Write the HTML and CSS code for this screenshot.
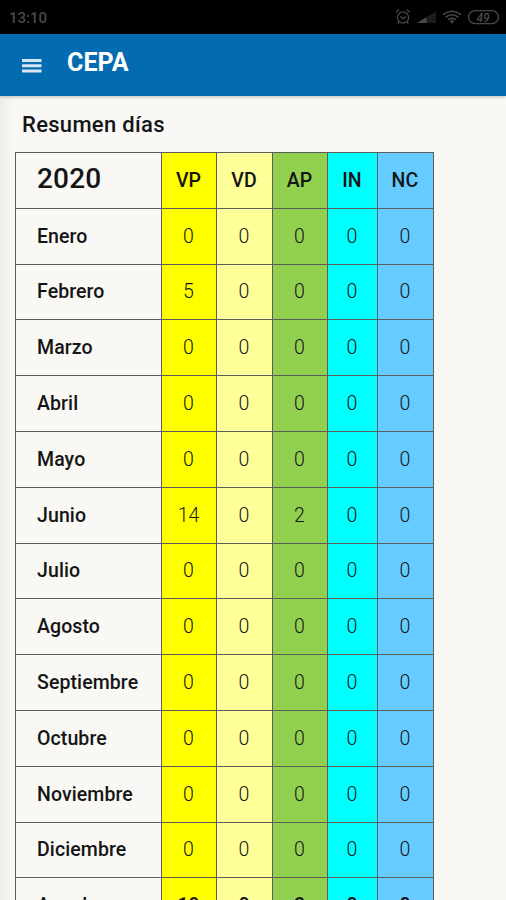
FILE: index.html
```
<!DOCTYPE html>
<html lang="es">
<head>
<meta charset="utf-8">
<title>CEPA</title>
<link rel="stylesheet" href="styles.css">
</head>
<body>
<div class="status">
  <span class="time">13:10</span>
  <svg class="tray" width="106" height="20" viewBox="0 0 106 20" fill="none" stroke="#484848" stroke-width="1.3">
    <circle cx="8" cy="10.5" r="5.6"/><path d="M5.4 9.6 8 11.6l3-2M1 5.2l3.2-2.6M15 5.2l-3.2-2.6M4 15l-1.400 1.600M12 15l1.400 1.600"/>
    <path d="M22 16 41 4.500v11.500z" fill="#1c1c1c" stroke="none"/><path d="M22 16l9.500-5.700v5.700z" fill="#4a4a4a" stroke="none"/>
    <path d="M48 7.700q9-7 18 0M50.500 10.300q6.500-5 13 0M53 12.900q4-3 8 0" stroke-width="1.6"/><path d="m54.600 14.100 2.400 2.600 2.400-2.600q-2.400-1.600-4.800 0z" fill="#4a4a4a" stroke="none"/>
    <rect x="73.500" y="3.700" width="30" height="13" rx="6.500"/>
    <text class="battery" x="88" y="15" text-anchor="middle">49</text>
  </svg>
</div>
<header class="bar">
  <svg class="menu" width="20" height="16" viewBox="0 0 20 16" fill="#d9e6f5"><path d="M0 2h19.500v3H0zM0 7.200h19.500v3H0zM0 12.400h19.500v3H0z"/></svg>
  <h1 class="title">CEPA</h1>
</header>
<main class="content">
  <h2 class="heading">Resumen días</h2>
  <table class="days">
    <colgroup><col class="c-month"><col class="c-vp"><col class="c-vd"><col class="c-ap"><col class="c-in"><col class="c-nc"></colgroup>
    <tr class="head"><th class="year">2020</th><th>VP</th><th>VD</th><th>AP</th><th>IN</th><th>NC</th></tr>
    <tr><th>Enero</th><td>0</td><td>0</td><td>0</td><td>0</td><td>0</td></tr>
    <tr><th>Febrero</th><td>5</td><td>0</td><td>0</td><td>0</td><td>0</td></tr>
    <tr><th>Marzo</th><td>0</td><td>0</td><td>0</td><td>0</td><td>0</td></tr>
    <tr><th>Abril</th><td>0</td><td>0</td><td>0</td><td>0</td><td>0</td></tr>
    <tr><th>Mayo</th><td>0</td><td>0</td><td>0</td><td>0</td><td>0</td></tr>
    <tr><th>Junio</th><td>14</td><td>0</td><td>2</td><td>0</td><td>0</td></tr>
    <tr><th>Julio</th><td>0</td><td>0</td><td>0</td><td>0</td><td>0</td></tr>
    <tr><th>Agosto</th><td>0</td><td>0</td><td>0</td><td>0</td><td>0</td></tr>
    <tr><th>Septiembre</th><td>0</td><td>0</td><td>0</td><td>0</td><td>0</td></tr>
    <tr><th>Octubre</th><td>0</td><td>0</td><td>0</td><td>0</td><td>0</td></tr>
    <tr><th>Noviembre</th><td>0</td><td>0</td><td>0</td><td>0</td><td>0</td></tr>
    <tr><th>Diciembre</th><td>0</td><td>0</td><td>0</td><td>0</td><td>0</td></tr>
    <tr class="total"><th>Anual</th><td>19</td><td>0</td><td>2</td><td>0</td><td>0</td></tr>
  </table>
</main>
</body>
</html>
```
FILE: styles.css
```
body {
  margin: 0;
  height: 900px;
  overflow: hidden;
  display: flex;
  flex-direction: column;
  background: #f9f8f5;
  color: #151515;
  font-family: Roboto, sans-serif;
}
.status {
  flex: none;
  height: 34px;
  box-sizing: border-box;
  padding: 0 5px 0 9px;
  display: flex;
  align-items: center;
  justify-content: space-between;
  background: #000;
}
.time { padding-top: 2px; color: #484848; font-size: 15px; font-weight: 500; }
.battery { font-size: 12px; font-weight: 500; font-style: italic; fill: #4a4a4a; stroke: none; }
.bar {
  position: relative;
  flex: none;
  height: 62px;
  box-sizing: border-box;
  padding-left: 22px;
  display: flex;
  align-items: center;
  gap: 25px;
  background: #036bb0;
  box-shadow: 0 1px 3px rgba(0, 0, 0, 0.25);
}
.title { margin: 0 0 6px; color: #fff; font-size: 25px; font-weight: 700; letter-spacing: 0.1px; }
.content {
  flex: 1;
  min-height: 0;
  padding-left: 15px;
  background: linear-gradient(90deg, #efeeeb, #f9f8f5 14px);
}
.heading { margin: 0 0 0 7px; height: 56px; line-height: 57px; font-size: 22px; font-weight: 500; letter-spacing: 0.3px; }
.days { width: 419px; table-layout: fixed; border-collapse: collapse; background: #f9f8f5; }
.c-month { width: 146px; }
.c-vp { width: 55px; background: #ff0; }
.c-vd { width: 56px; background: #ff9; }
.c-ap { width: 55px; background: #92d050; }
.c-in { width: 50px; background: #0ff; }
.c-nc { width: 56px; background: #6cf; }
.days tr { height: 55.8px; }
.days th, .days td { padding: 0 1px 0 0; border: 1px solid #5d5d5d; text-align: center; font-size: 19.5px; }
.days th { font-weight: 500; letter-spacing: 0.1px; }
.days td { font-weight: 300; }
.days th:first-child { padding-left: 21px; text-align: left; }
.days .year { padding-bottom: 3px; font-size: 28px; letter-spacing: 0.2px; }
.days .total td { font-weight: 500; }
```
